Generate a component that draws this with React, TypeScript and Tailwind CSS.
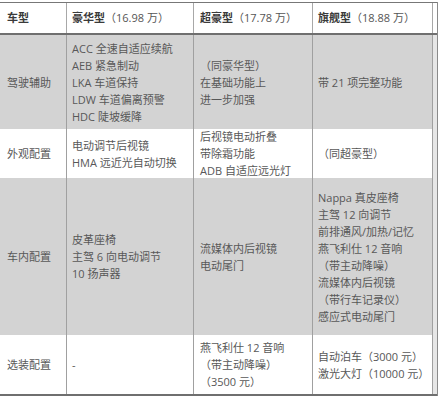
import React from "react";

type Row = { h: string; bg: string; cells: string[][] };

const rows: Row[] = [
  {
    h: "h-[94px]",
    bg: "bg-[#d3d3d3]",
    cells: [
      ["驾驶辅助"],
      ["ACC 全速自适应续航", "AEB 紧急制动", "LKA 车道保持", "LDW 车道偏离预警", "HDC 陡坡缓降"],
      ["（同豪华型）", "在基础功能上", "进一步加强"],
      ["带 21 项完整功能"],
    ],
  },
  {
    h: "h-[49px]",
    bg: "bg-white",
    cells: [
      ["外观配置"],
      ["电动调节后视镜", "HMA 远近光自动切换"],
      ["后视镜电动折叠", "带除霜功能", "ADB 自适应远光灯"],
      ["（同超豪型）"],
    ],
  },
  {
    h: "h-[157px]",
    bg: "bg-[#d3d3d3]",
    cells: [
      ["车内配置"],
      ["皮革座椅", "主驾 6 向电动调节", "10 扬声器"],
      ["流媒体内后视镜", "电动尾门"],
      [
        "Nappa 真皮座椅",
        "主驾 12 向调节",
        "前排通风/加热/记忆",
        "燕飞利仕 12 音响",
        "（带主动降噪）",
        "流媒体内后视镜",
        "（带行车记录仪）",
        "感应式电动尾门",
      ],
    ],
  },
  {
    h: "h-[61px]",
    bg: "bg-white",
    cells: [
      ["选装配置"],
      ["-"],
      ["燕飞利仕 12 音响", "（带主动降噪）", "（3500 元）"],
      ["自动泊车（3000 元）", "激光大灯（10000 元）"],
    ],
  },
];

const cols = ["w-[67px] pl-[7px]", "w-[127px] pl-[5px]", "w-[119px] pl-[6px]", "w-[120px] pl-[5px]"];

const headers: [string, string][] = [
  ["车型", ""],
  ["豪华型", "（16.98 万）"],
  ["超豪型", "（17.78 万）"],
  ["旗舰型", "（18.88 万）"],
];

export default function App() {
  return (
    <div
      className="w-[441px] h-[400px] bg-white pt-[2px] overflow-hidden"
      style={{ fontFamily: '"Open Sans","Noto Sans CJK SC",sans-serif' }}
    >
      <div className="w-[438px] border-r border-r-[#8a8a8a]">
        <div className="flex h-[33px] border-t border-t-[#777] border-b-2 border-b-[#6f6f6f] bg-white text-[11px]">
          {headers.map(([a, b], i) => (
            <div
              key={i}
              className={`${cols[i]} flex items-center border-r border-r-[#a8a8a8] whitespace-nowrap`}
            >
              <span className="font-semibold text-[#3a3a3a]">{a}</span>
              <span className="text-[#555]">{b}</span>
            </div>
          ))}
          <div className="flex-1" />
        </div>
        {rows.map((r, ri) => (
          <div
            key={ri}
            className={`flex ${r.h} ${r.bg} text-[11px] leading-[17px] text-[#585858] ${
              ri === rows.length - 1 ? "border-b-2 border-b-[#6f6f6f]" : ""
            }`}
          >
            {r.cells.map((c, ci) => (
              <div
                key={ci}
                className={`${cols[ci]} flex flex-col justify-center border-r border-r-[#a0a0a0] whitespace-nowrap`}
              >
                {c.map((l, li) => (
                  <div key={li}>{l}</div>
                ))}
              </div>
            ))}
            <div className="flex-1 bg-[#e6e6e6]" />
          </div>
        ))}
      </div>
    </div>
  );
}
